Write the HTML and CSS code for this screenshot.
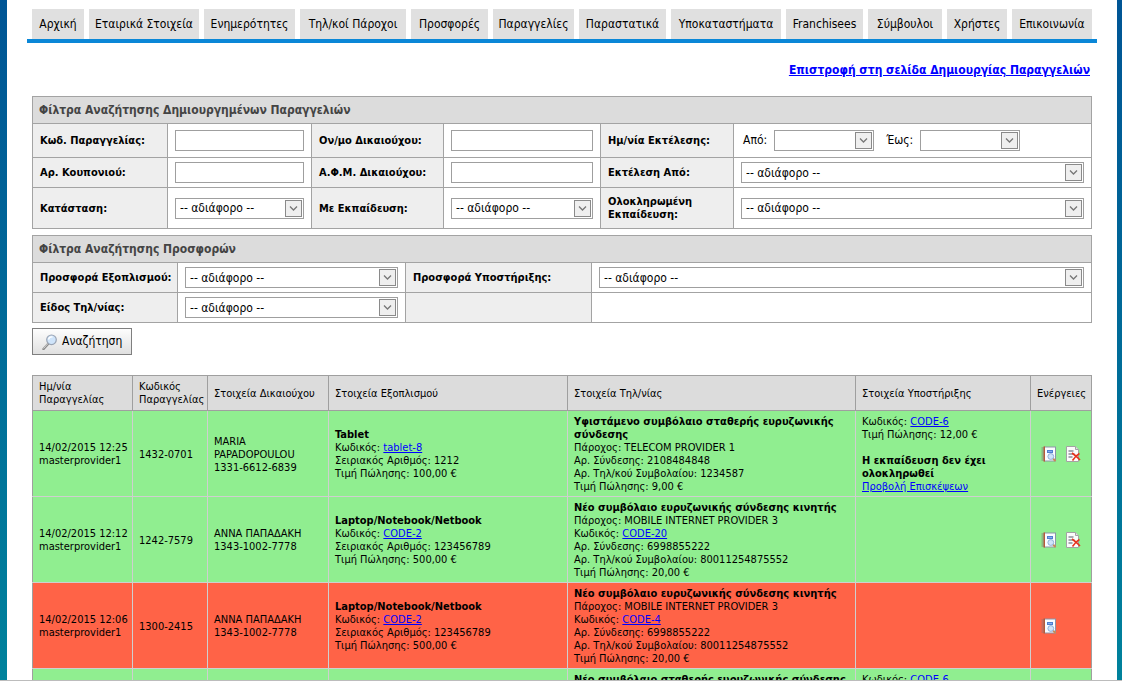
FILE: index.html
```html
<!DOCTYPE html>
<html lang="el">
<head>
<meta charset="utf-8">
<title>Αναζήτηση Παραγγελιών</title>
<link rel="stylesheet" href="styles.css">
</head>
<body>
<svg class="sprite" aria-hidden="true">
  <symbol id="view" viewBox="0 0 16 16">
    <rect x="3.5" y="1" width="11" height="14" fill="#fbfcff" stroke="#8d94a8"/>
    <rect x="2.500" y=".5" width="1.500" height="15" fill="#c3532b"/>
    <path d="M.5 2h3M.5 4h3M.5 6h3M.5 8h3M.5 10h3M.5 12h3M.5 14h3" stroke="#8a7777" stroke-width=".9"/>
    <rect x="6.500" y="4.500" width="5" height="2" fill="#88aef0" stroke="#4f7fd0"/>
    <path d="M12 12.500l2.500 2.500" stroke="#c88b55" stroke-width="2"/>
    <circle cx="9.800" cy="10.500" r="2.900" fill="#cfe4fa" stroke="#8fb0da"/>
  </symbol>
  <symbol id="remove" viewBox="0 0 16 16">
    <path d="M1.500.500h9l3 3v12h-12z" fill="#fcfcfc" stroke="#a3a3a3"/>
    <path d="M10.500.500v3h3" fill="#e4e4e4" stroke="#a3a3a3"/>
    <path d="M3.500 5h5M3.500 8h6M3.500 11h4" stroke="#8b8f99" stroke-width="1.300"/>
    <path d="M7 7c3 2 5 4 8 7M14.500 7.500c-3 1.500-5 4-7 7" fill="none" stroke="#e5331d" stroke-width="1.600"/>
  </symbol>
</svg>
<div class="page">
  <nav class="menu">
    <a href="#">Αρχική</a>
    <a href="#">Εταιρικά Στοιχεία</a>
    <a href="#">Ενημερότητες</a>
    <a href="#">Τηλ/κοί Πάροχοι</a>
    <a href="#">Προσφορές</a>
    <a href="#">Παραγγελίες</a>
    <a href="#">Παραστατικά</a>
    <a href="#">Υποκαταστήματα</a>
    <a href="#">Franchisees</a>
    <a href="#">Σύμβουλοι</a>
    <a href="#">Χρήστες</a>
    <a href="#">Επικοινωνία</a>
  </nav>
  <main class="content">
    <p class="back"><a href="#">Επιστροφή στη σελίδα Δημιουργίας Παραγγελιών</a></p>

    <form>
      <table class="filters">
        <colgroup>
          <col class="w-135"><col class="w-144"><col class="w-132"><col class="w-157"><col class="w-133"><col>
        </colgroup>
        <tr><th class="title" colspan="6">Φίλτρα Αναζήτησης Δημιουργημένων Παραγγελιών</th></tr>
        <tr class="tall">
          <th><label for="code">Κωδ. Παραγγελίας:</label></th>
          <td><input class="field" id="code" type="text"></td>
          <th><label for="name">Ον/μο Δικαιούχου:</label></th>
          <td><input class="field" id="name" type="text"></td>
          <th>Ημ/νία Εκτέλεσης:</th>
          <td>
            <div class="range">
              <label for="from">Από:</label>
              <select class="field date" id="from"><option></option></select>
              <label for="to">Έως:</label>
              <select class="field date" id="to"><option></option></select>
            </div>
          </td>
        </tr>
        <tr>
          <th><label for="coupon">Αρ. Κουπονιού:</label></th>
          <td><input class="field" id="coupon" type="text"></td>
          <th><label for="afm">Α.Φ.Μ. Δικαιούχου:</label></th>
          <td><input class="field" id="afm" type="text"></td>
          <th><label for="by">Εκτέλεση Από:</label></th>
          <td><select class="field" id="by"><option>-- αδιάφορο --</option></select></td>
        </tr>
        <tr class="taller">
          <th><label for="status">Κατάσταση:</label></th>
          <td><select class="field" id="status"><option>-- αδιάφορο --</option></select></td>
          <th><label for="training">Με Εκπαίδευση:</label></th>
          <td><select class="field" id="training"><option>-- αδιάφορο --</option></select></td>
          <th><label for="trained">Ολοκληρωμένη Εκπαίδευση:</label></th>
          <td><select class="field" id="trained"><option>-- αδιάφορο --</option></select></td>
        </tr>
      </table>

      <table class="filters offers">
        <colgroup><col class="w-145"><col class="w-228"><col class="w-186"><col></colgroup>
        <tr><th class="title" colspan="4">Φίλτρα Αναζήτησης Προσφορών</th></tr>
        <tr>
          <th><label for="equipment">Προσφορά Εξοπλισμού:</label></th>
          <td><select class="field" id="equipment"><option>-- αδιάφορο --</option></select></td>
          <th><label for="support">Προσφορά Υποστήριξης:</label></th>
          <td><select class="field" id="support"><option>-- αδιάφορο --</option></select></td>
        </tr>
        <tr>
          <th><label for="telecom">Είδος Τηλ/νίας:</label></th>
          <td><select class="field" id="telecom"><option>-- αδιάφορο --</option></select></td>
          <th></th>
          <td></td>
        </tr>
      </table>

      <button class="search" type="button">
        <svg width="16" height="16" viewBox="0 0 16 16" aria-hidden="true">
          <path d="M6.500 9.500L1.500 15" stroke="#8b8b8b" stroke-width="2.400" stroke-linecap="round"/>
          <path d="M6 9.500L1.700 14.200" stroke="#d9d9d9" stroke-linecap="round"/>
          <circle cx="9.500" cy="5.800" r="4.800" fill="#cfe4fa" stroke="#9aa4b4" stroke-width="1.200"/>
          <path d="M6.500 5.500c.5-2 2-2.800 4-2.500" fill="none" stroke="#fff" stroke-width="1.300"/>
        </svg>
        <span>Αναζήτηση</span>
      </button>
    </form>

    <table class="orders">
      <colgroup>
        <col class="w-100"><col class="w-75"><col class="w-121"><col class="w-239"><col class="w-288"><col class="w-175"><col>
      </colgroup>
      <thead>
        <tr>
          <th>Ημ/νία Παραγγελίας</th><th>Κωδικός Παραγγελίας</th><th>Στοιχεία Δικαιούχου</th><th>Στοιχεία Εξοπλισμού</th>
          <th>Στοιχεία Τηλ/νίας</th><th>Στοιχεία Υποστήριξης</th><th>Ενέργειες</th>
        </tr>
      </thead>
      <tbody>
        <tr class="ok">
          <td class="when">14/02/2015 12:25<br>masterprovider1</td>
          <td>1432-0701</td>
          <td>MARIA PAPADOPOULOU<br>1331-6612-6839</td>
          <td><b>Tablet</b><br>Κωδικός: <a href="#">tablet-8</a><br>Σειριακός Αριθμός: 1212<br>Τιμή Πώλησης: 100,00 €</td>
          <td><b>Υφιστάμενο συμβόλαιο σταθερής ευρυζωνικής σύνδεσης</b><br>Πάροχος: TELECOM PROVIDER 1<br>Αρ. Σύνδεσης: 2108484848<br>Αρ. Τηλ/κού Συμβολαίου: 1234587<br>Τιμή Πώλησης: 9,00 €</td>
          <td>Κωδικός: <a href="#">CODE-6</a><br>Τιμή Πώλησης: 12,00 €<br><br><b>Η εκπαίδευση δεν έχει ολοκληρωθεί</b><br><a href="#">Προβολή Επισκέψεων</a></td>
          <td>
            <div class="actions">
              <button type="button" aria-label="Προβολή"><svg><use href="#view"/></svg></button>
              <button type="button" aria-label="Ακύρωση"><svg><use href="#remove"/></svg></button>
            </div>
          </td>
        </tr>
        <tr class="ok">
          <td class="when">14/02/2015 12:12<br>masterprovider1</td>
          <td>1242-7579</td>
          <td>ΑΝΝΑ ΠΑΠΑΔΑΚΗ<br>1343-1002-7778</td>
          <td><b>Laptop/Notebook/Netbook</b><br>Κωδικός: <a href="#">CODE-2</a><br>Σειριακός Αριθμός: 123456789<br>Τιμή Πώλησης: 500,00 €</td>
          <td><b>Νέο συμβόλαιο ευρυζωνικής σύνδεσης κινητής</b><br>Πάροχος: MOBILE INTERNET PROVIDER 3<br>Κωδικός: <a href="#">CODE-20</a><br>Αρ. Σύνδεσης: 6998855222<br>Αρ. Τηλ/κού Συμβολαίου: 80011254875552<br>Τιμή Πώλησης: 20,00 €</td>
          <td></td>
          <td>
            <div class="actions">
              <button type="button" aria-label="Προβολή"><svg><use href="#view"/></svg></button>
              <button type="button" aria-label="Ακύρωση"><svg><use href="#remove"/></svg></button>
            </div>
          </td>
        </tr>
        <tr class="cancelled">
          <td class="when">14/02/2015 12:06<br>masterprovider1</td>
          <td>1300-2415</td>
          <td>ΑΝΝΑ ΠΑΠΑΔΑΚΗ<br>1343-1002-7778</td>
          <td><b>Laptop/Notebook/Netbook</b><br>Κωδικός: <a href="#">CODE-2</a><br>Σειριακός Αριθμός: 123456789<br>Τιμή Πώλησης: 500,00 €</td>
          <td><b>Νέο συμβόλαιο ευρυζωνικής σύνδεσης κινητής</b><br>Πάροχος: MOBILE INTERNET PROVIDER 3<br>Κωδικός: <a href="#">CODE-4</a><br>Αρ. Σύνδεσης: 6998855222<br>Αρ. Τηλ/κού Συμβολαίου: 80011254875552<br>Τιμή Πώλησης: 20,00 €</td>
          <td></td>
          <td>
            <div class="actions">
              <button type="button" aria-label="Προβολή"><svg><use href="#view"/></svg></button>
            </div>
          </td>
        </tr>
        <tr class="ok partial">
          <td></td><td></td><td></td><td></td>
          <td><b>Νέο συμβόλαιο σταθερής ευρυζωνικής σύνδεσης</b></td>
          <td>Κωδικός: <a href="#">CODE-6</a></td>
          <td></td>
        </tr>
      </tbody>
    </table>
  </main>
</div>
</body>
</html>
```

FILE: styles.css
```css
* { box-sizing: border-box; }

body {
  height: 100vh;
  margin: 0;
  padding: 0 5px 0 7px;
  overflow: hidden;
  border-bottom: 1px solid #bcbcbc;
  background: linear-gradient(#005595, #00829c);
  color: #000;
  font: 12px/15px Tahoma, "DejaVu Sans Condensed", "Open Sans", sans-serif;
}

a { color: #00f; }

.sprite { display: none; }

.page {
  min-height: 100%;
  padding: 9px 20px 0;
  background: #fff;
}

.menu {
  display: grid;
  grid-template-columns: 52fr 110fr 91fr 106fr 77fr 81fr 87fr 110fr 77fr 74fr 60fr 80fr;
  gap: 5px;
  padding: 0 5px;
  border-bottom: 4px solid #0a87d7;
}

.menu a {
  height: 30px;
  background: #e0e0e0;
  color: #000;
  line-height: 31px;
  text-align: center;
  text-decoration: none;
  white-space: nowrap;
}

.content { padding: 0 5px; }

.back {
  margin: 20px 2px 18px;
  font-weight: bold;
  text-align: right;
}

table {
  width: 100%;
  table-layout: fixed;
  border-collapse: collapse;
}

.w-135 { width: 135px; }
.w-144 { width: 144px; }
.w-132 { width: 132px; }
.w-157 { width: 157px; }
.w-133 { width: 133px; }
.w-145 { width: 145px; }
.w-228 { width: 228px; }
.w-186 { width: 186px; }
.w-100 { width: 100px; }
.w-75 { width: 75px; }
.w-121 { width: 121px; }
.w-239 { width: 239px; }
.w-288 { width: 288px; }
.w-175 { width: 175px; }

.filters { margin-bottom: 6px; }
.offers { margin-bottom: 5px; }

.filters tr { height: 30px; }
.filters tr:first-child { height: 27px; }
.filters .tall { height: 34px; }
.filters .taller { height: 41px; }

.filters th,
.filters td {
  padding: 0 7px;
  border: 1px solid #a3a3a3;
}

.filters th {
  background: #eee;
  font-size: 11px;
  line-height: 13px;
  text-align: left;
}

.offers th { white-space: nowrap; }

.filters .title {
  padding: 0 6px;
  background: #dcdcdc;
  color: #444;
  font-size: 12px;
}

.field {
  display: block;
  width: 100%;
  height: 21px;
  padding: 1px 4px 0;
  border: 1px solid #9f9f9f;
  border-radius: 0;
  background: #fff;
  color: #000;
  font: inherit;
}

select.field {
  appearance: none;
  background: #fff url("data:image/svg+xml,%3Csvg xmlns='http://www.w3.org/2000/svg' width='17' height='17'%3E%3Crect x='.5' y='.5' width='16' height='16' fill='%23efefef' stroke='%238a8a8a'/%3E%3Cpath d='M5 6.500l3.500 3.500 3.500-3.500' fill='none' stroke='%23777' stroke-width='1.300'/%3E%3C/svg%3E") no-repeat right 1px top 1px;
}

.range {
  display: flex;
  align-items: center;
  gap: 7px;
  padding-left: 2px;
}

.field.date { width: 100px; margin-right: 5px; }

.search {
  display: flex;
  align-items: center;
  gap: 4px;
  height: 27px;
  padding: 0 9px;
  border: 1px solid #7f7f7f;
  background: linear-gradient(#fdfdfd, #e0e0e0);
  color: #000;
  font: inherit;
}

.orders {
  margin-top: 20px;
  border: 1px solid #9f9f9f;
  font-size: 11px;
  line-height: 13px;
}

.orders th {
  height: 35px;
  padding: 0 6px;
  border: 1px solid #9f9f9f;
  background: #dcdcdc;
  font-weight: normal;
  text-align: left;
}

.orders td {
  height: 86px;
  padding: 4px 6px 3px;
  border: 1px solid #cfcfcf;
}

.orders td:first-child { border-left-color: #9f9f9f; }
.orders td:last-child { border-right-color: #9f9f9f; }
.orders tr:first-child td { border-top-color: #9f9f9f; }

.orders .when { white-space: nowrap; }

.ok { background: #90ee90; }
.cancelled { background: #ff6347; }
.partial td { vertical-align: top; }

.actions {
  display: flex;
  gap: 8px;
  padding-left: 4px;
}

.actions button {
  width: 16px;
  height: 16px;
  padding: 0;
  border: 0;
  background: none;
}

.actions svg {
  display: block;
  width: 16px;
  height: 16px;
}
```
